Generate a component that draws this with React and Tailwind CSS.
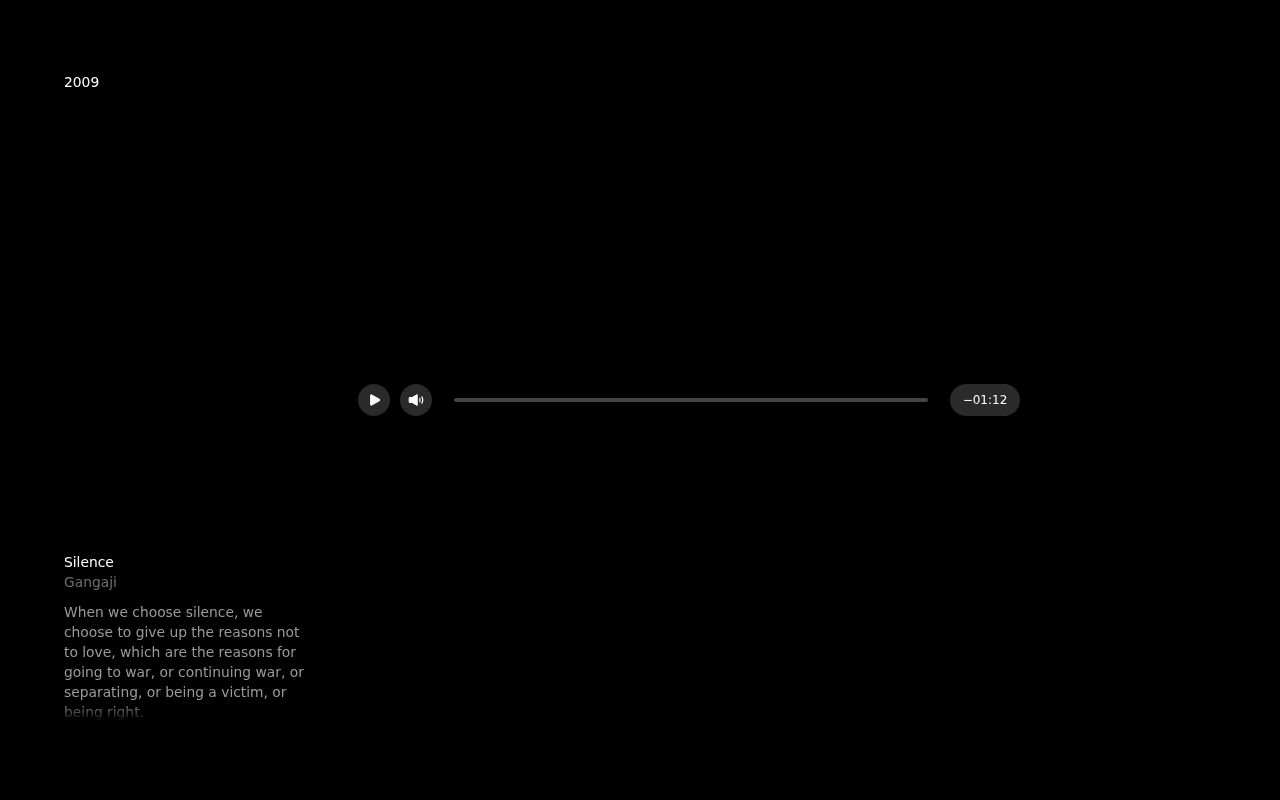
const PlayIcon = () => (
  <svg width="12" height="12" viewBox="0 0 12 12" className="ml-[2px]">
    <path d="M1.5 1.4 V10.6 C1.5 11.3 2.1 11.5 2.6 11.2 L10.6 6.7 C11.2 6.3 11.2 5.7 10.6 5.3 L2.6 0.8 C2.1 0.5 1.5 0.7 1.5 1.4 Z" fill="#fff" stroke="#fff" strokeWidth="0.8" strokeLinejoin="round" />
  </svg>
);

const VolumeIcon = () => (
  <svg width="17" height="12" viewBox="0 0 17 12" fill="none">
    <path d="M1.2 3.6 H4 L9.2 0.6 V11.4 L4 8.4 H1.2 Z" fill="#fff" stroke="#fff" strokeWidth="1" strokeLinejoin="round" />
    <path d="M11.6 4.3 C12.2 5.3 12.2 6.7 11.6 7.7" stroke="#fff" strokeWidth="1.2" strokeLinecap="round" />
    <path d="M13.8 2.8 C15 4.8 15 7.2 13.8 9.2" stroke="#fff" strokeWidth="1.2" strokeLinecap="round" />
  </svg>
);

const App = () => {
  return (
    <div className="h-screen bg-black flex pl-16 overflow-hidden font-['DejaVu_Sans',sans-serif] text-[13.84px] leading-5">
      <div className="w-[242px] shrink-0 flex flex-col justify-between pt-[72px] pb-[78px] transform-gpu">
        <p className="text-white">2009</p>
        <div>
          <p className="text-white">Silence</p>
          <p className="text-[#6f6f6f]">Gangaji</p>
          <p className="mt-2.5 text-[#9a9a9a] [mask-image:linear-gradient(to_bottom,black_calc(100%-20px),transparent)]">
            When we choose silence, we choose to give up the reasons not to love, which are the reasons for going to
            war, or continuing war, or separating, or being a victim, or being right.
          </p>
        </div>
      </div>

      <div className="ml-[52px] w-[662px] flex items-center">
        <button className="w-8 h-8 rounded-full bg-[#2a2a2a] flex items-center justify-center">
          <PlayIcon />
        </button>
        <button className="ml-2.5 w-8 h-8 rounded-full bg-[#2a2a2a] flex items-center justify-center">
          <VolumeIcon />
        </button>
        <div className="mx-[22px] flex-1 h-1 rounded-full bg-[#444444]" />
        <div className="w-[70px] h-8 rounded-full bg-[#2a2a2a] flex items-center justify-center text-white text-xs">
          <span className="transform-gpu">−01:12</span>
        </div>
      </div>
    </div>
  );
};

export default App;
